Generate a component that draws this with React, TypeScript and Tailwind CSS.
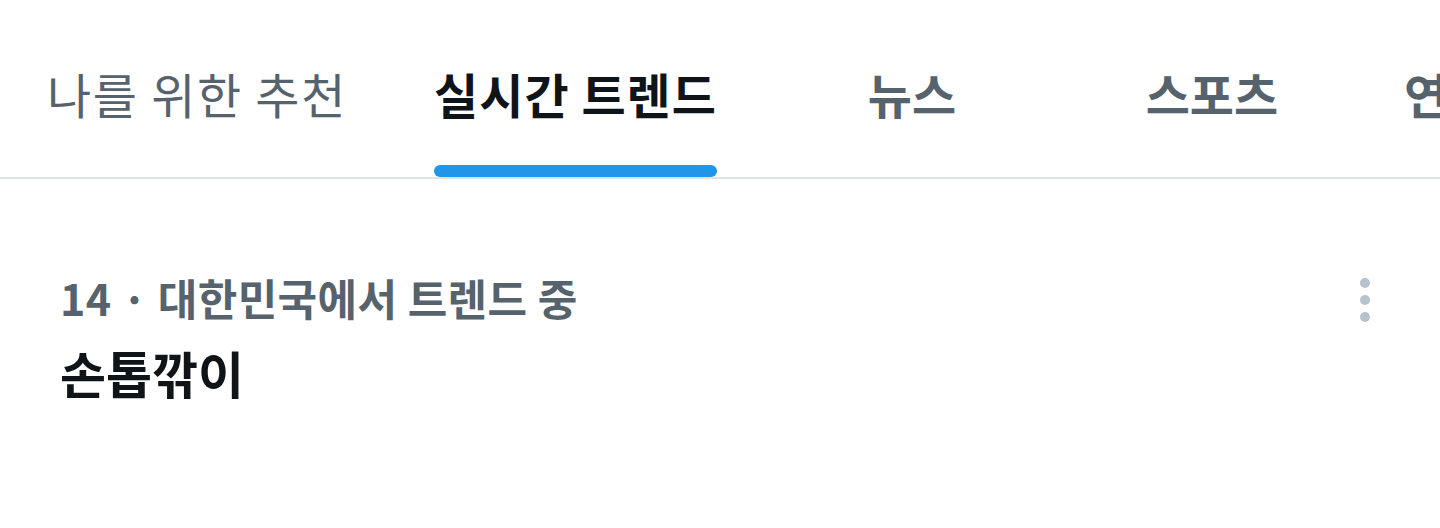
import React from "react";

const font = { fontFamily: '"Noto Sans CJK KR", "Noto Sans", sans-serif' };

export default function App() {
  return (
    <div className="w-[1440px] h-[528px] bg-white overflow-hidden" style={font}>
      <div className="flex h-[179px] border-b-[2px] border-[#dde3e7] pl-[2px] whitespace-nowrap">
        <div className="pl-[45px] pr-[42px] flex flex-col items-center">
          <div className="h-[165px] flex items-center pt-[21px] text-[48px] font-normal text-[#56636d] tracking-[1.7px]">나를 위한 추천</div>
        </div>
        <div className="px-[45px] flex flex-col items-center">
          <div className="h-[165px] flex items-center pt-[21px] text-[48px] font-bold text-[#0f1419] tracking-[1px]">실시간 트렌드</div>
          <div className="h-[12px] w-full rounded-full bg-[#2196e9]" />
        </div>
        <div className="w-[300px] shrink-0 flex flex-col items-center">
          <div className="h-[165px] flex items-center pt-[21px] text-[48px] font-bold text-[#56636d]">뉴스</div>
        </div>
        <div className="w-[300px] shrink-0 flex flex-col items-center">
          <div className="h-[165px] flex items-center pt-[21px] text-[48px] font-bold text-[#56636d]">스포츠</div>
        </div>
        <div className="pl-[42px] flex flex-col">
          <div className="h-[165px] flex items-center pt-[21px] text-[48px] font-bold text-[#56636d]">연예</div>
        </div>
      </div>
      <div className="flex pl-[60px] pr-[69px] pt-[88px]">
        <div className="flex-1 flex flex-col">
          <div className="text-[43px] leading-[60px] font-bold text-[#56636d] tracking-[0.4px]">14 · 대한민국에서 트렌드 중</div>
          <div className="text-[50px] leading-[70px] font-bold text-[#0f1419] mt-[10px]">손톱깎이</div>
        </div>
        <div className="flex flex-col items-center gap-[7px] pt-[11px] w-[12px]">
          <div className="w-[10px] h-[10px] rounded-full bg-[#b6c3cc]" />
          <div className="w-[10px] h-[10px] rounded-full bg-[#b6c3cc]" />
          <div className="w-[10px] h-[10px] rounded-full bg-[#b6c3cc]" />
        </div>
      </div>
    </div>
  );
}
